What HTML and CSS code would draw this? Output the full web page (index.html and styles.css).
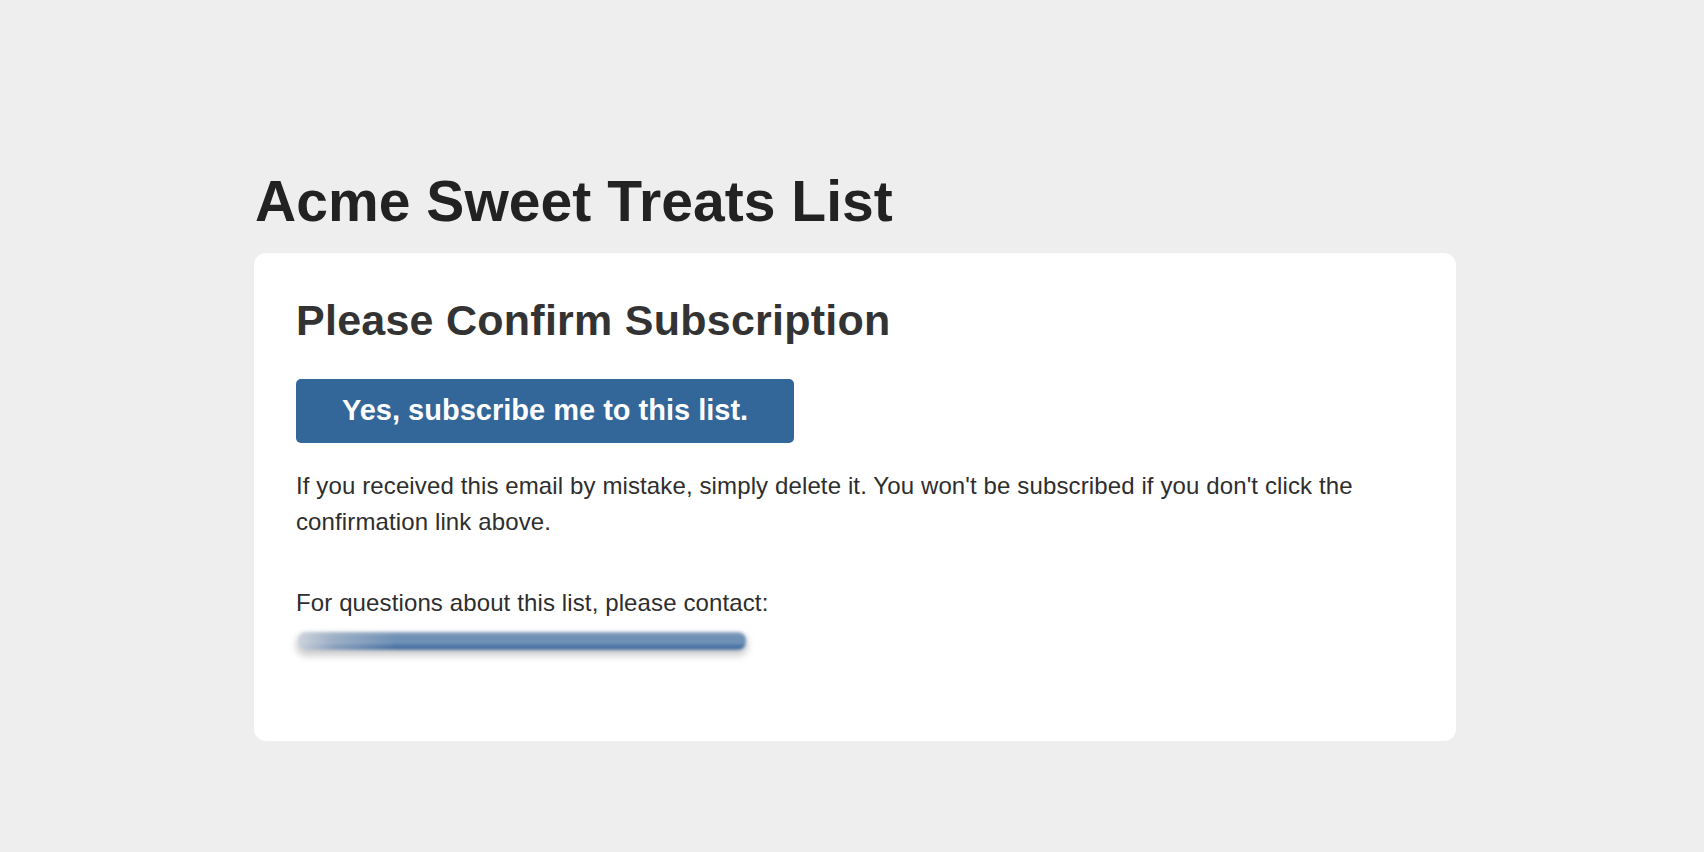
FILE: index.html
```html
<!DOCTYPE html>
<html lang="en">
<head>
<meta charset="utf-8">
<title>Acme Sweet Treats List</title>
<link rel="stylesheet" href="styles.css">
</head>
<body>
<div class="page">
  <h1 class="list-title">Acme Sweet Treats List</h1>
  <div class="card">
    <h2 class="card-title">Please Confirm Subscription</h2>
    <a class="confirm-btn" href="#">Yes, subscribe me to this list.</a>
    <p class="note">If you received this email by mistake, simply delete it. You won't be subscribed if you don't click the confirmation link above.</p>
    <p class="contact">For questions about this list, please contact:<br><span class="redacted"></span></p>
  </div>
</div>
</body>
</html>
```
FILE: styles.css
```css
html, body {
  margin: 0;
  padding: 0;
  background: #eeeeee;
}
body {
  font-family: "Liberation Sans", Arial, Helvetica, sans-serif;
  color: #333333;
}
.page {
  width: 1202px;
  margin: 0 auto;
  padding: 171px 0 0 6px;
}
.list-title {
  margin: 0 0 21px 1px;
  font-size: 57px;
  line-height: 61px;
  font-weight: bold;
  color: #222222;
  letter-spacing: 0.05px;
}
.card {
  background: #ffffff;
  border-radius: 12px;
  padding: 40px 42px 41px 42px;
}
.card-title {
  margin: 0 0 32px 0;
  font-size: 43px;
  line-height: 54px;
  font-weight: bold;
  color: #333333;
  letter-spacing: 0.25px;
}
.confirm-btn {
  display: inline-block;
  background: #336699;
  color: #ffffff;
  text-decoration: none;
  font-weight: bold;
  font-size: 29px;
  line-height: 35px;
  padding: 14px 46px 15px;
  border-radius: 5px;
  margin-bottom: 25px;
}
.note,
.contact {
  font-size: 24px;
  line-height: 36px;
  margin: 0;
  color: #2e2e2e;
  letter-spacing: 0.12px;
}
.note {
  margin-bottom: 45px;
}
.contact {
  margin-bottom: 43px;
}
.redacted {
  display: inline-block;
  vertical-align: middle;
  width: 448px;
  height: 18px;
  margin-left: 2px;
  border-radius: 8px;
  background:
    linear-gradient(90deg, rgba(215, 218, 224, 0.9) 0%, rgba(200, 205, 215, 0.5) 8%, rgba(255, 255, 255, 0) 22%),
    linear-gradient(180deg, #8da6c2 0%, #6c8db3 30%, #7393b8 60%, #3f6b9f 85%, #5b7ca5 100%);
  box-shadow: 0 4px 6px 2px rgba(185, 185, 185, 0.7);
  filter: blur(1.5px);
}
```
